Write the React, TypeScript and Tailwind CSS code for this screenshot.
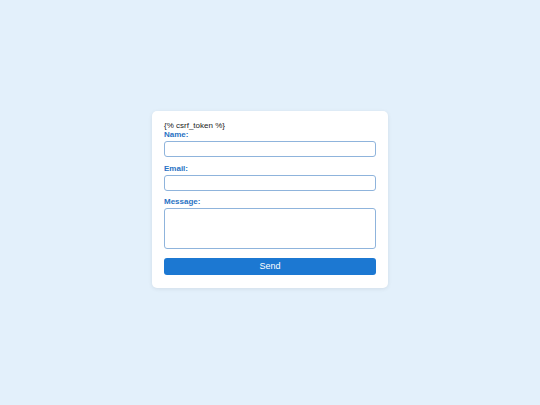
export default function App() {
  return (
    <div
      className="flex min-h-screen items-center justify-center bg-[#e3f0fb] pb-[6px]"
      style={{ fontFamily: '"Liberation Sans", Arial, sans-serif' }}
    >
      <form className="w-[236px] rounded-[5px] bg-white px-[12px] pt-[10px] pb-[13px] shadow-[0_1px_4px_rgba(0,0,0,0.08)]">
        <div className="text-[8px] leading-[9px] text-[#222]">{"{% csrf_token %}"}</div>
        <label className="mb-[2px] block text-[8px] font-bold leading-[9px] text-[#2a73c4]">Name:</label>
        <input
          type="text"
          className="block h-[16px] w-full rounded-[3px] border border-[#8fb4dc] bg-white outline-none"
        />
        <label className="mt-[7px] mb-[2px] block text-[8px] font-bold leading-[9px] text-[#2a73c4]">Email:</label>
        <input
          type="email"
          className="block h-[16px] w-full rounded-[3px] border border-[#8fb4dc] bg-white outline-none"
        />
        <label className="mt-[6px] mb-[2px] block text-[8px] font-bold leading-[9px] text-[#2a73c4]">Message:</label>
        <textarea className="block h-[41px] w-full resize-none rounded-[3px] border border-[#8fb4dc] bg-white outline-none" />
        <button
          type="button"
          className="mt-[9px] block h-[17px] w-full rounded-[3px] bg-[#1c78d2] text-[9px] leading-[17px] text-white"
        >
          Send
        </button>
      </form>
    </div>
  );
}
